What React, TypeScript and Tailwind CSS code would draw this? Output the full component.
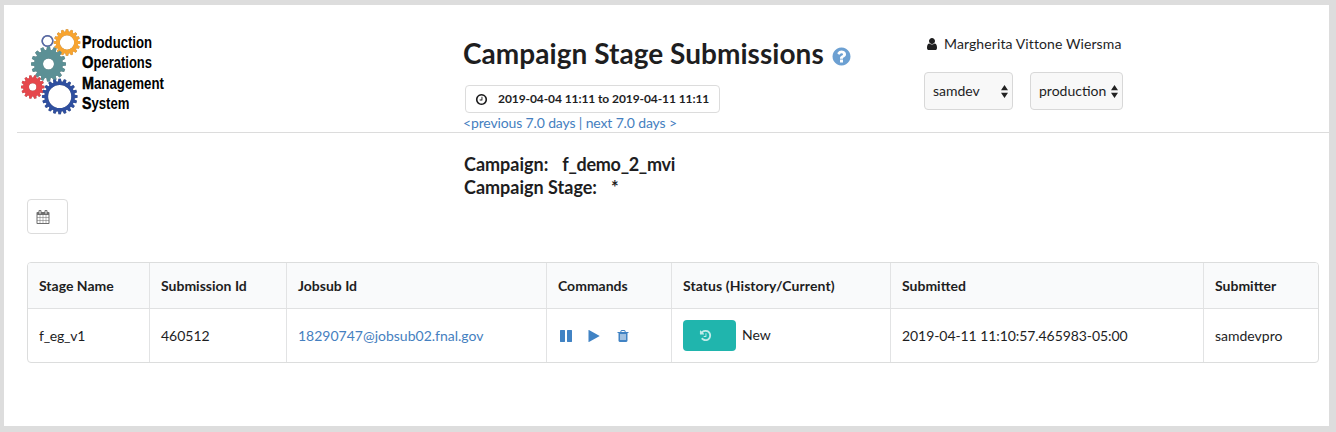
import type { ReactNode } from "react";

const icons = {
  user: "M1536 1399q0 109-62.5 187t-150.5 78h-854q-88 0-150.5-78t-62.5-187q0-85 8.500-160.500t31.500-152 58.500-131 94-89 134.500-34.500q131 128 313 128t313-128q76 0 134.500 34.500t94 89 58.500 131 31.500 152 8.500 160.500zm-256-887q0 159-112.500 271.500t-271.500 112.500-271.500-112.500-112.500-271.500 112.500-271.500 271.500-112.500 271.500 112.500 112.500 271.500z",
  help: "M1024 1376v-192q0-14-9-23t-23-9h-192q-14 0-23 9t-9 23v192q0 14 9 23t23 9h192q14 0 23-9t9-23zm256-672q0-88-55.5-163t-138.5-116-170-41q-243 0-371 213-15 24 8 42l132 100q7 6 19 6 16 0 25-12 53-68 86-92 34-24 86-24 48 0 85.5 26t37.5 59q0 38-20 61t-68 45q-63 28-115.5 86.5t-52.5 125.5v36q0 14 9 23t23 9h192q14 0 23-9t9-23q0-19 21.5-49.5t54.5-49.5q32-18 49-28.5t46-35 44.5-48 28-60.5 12.5-81zm384 192q0 209-103 385.5t-279.5 279.5-385.5 103-385.5-103-279.5-279.5-103-385.5 103-385.5 279.5-279.5 385.5-103 385.5 103 279.5 279.5 103 385.5z",
  clock: "M1024 544v448q0 14-9 23t-23 9h-320q-14 0-23-9t-9-23v-64q0-14 9-23t23-9h224v-352q0-14 9-23t23-9h64q14 0 23 9t9 23zm416 352q0-148-73-273t-198-198-273-73-273 73-198 198-73 273 73 273 198 198 273 73 273-73 198-198 73-273zm224 0q0 209-103 385.5t-279.5 279.5-385.5 103-385.5-103-279.5-279.5-103-385.5 103-385.5 279.5-279.5 385.5-103 385.5 103 279.5 279.5 103 385.5z",
  calendar: "M192 1664h288v-288h-288v288zm352 0h320v-288h-320v288zm-352-352h288v-320h-288v320zm352 0h320v-320h-320v320zm-352-384h288v-288h-288v288zm736 736h320v-288h-320v288zm-384-736h320v-288h-320v288zm768 736h288v-288h-288v288zm-384-352h320v-320h-320v320zm-352-864v-288q0-13-9.5-22.5t-22.5-9.5h-64q-13 0-22.5 9.5t-9.5 22.5v288q0 13 9.5 22.5t22.5 9.5h64q13 0 22.5-9.5t9.5-22.5zm736 864h288v-320h-288v320zm-384-384h320v-288h-320v288zm384 0h288v-288h-288v288zm32-480v-288q0-13-9.5-22.5t-22.5-9.5h-64q-13 0-22.5 9.5t-9.5 22.5v288q0 13 9.5 22.5t22.5 9.5h64q13 0 22.5-9.5t9.5-22.5zm384-64v1280q0 52-38 90t-90 38h-1408q-52 0-90-38t-38-90v-1280q0-52 38-90t90-38h128v-96q0-66 47-113t113-47h64q66 0 113 47t47 113v96h384v-96q0-66 47-113t113-47h64q66 0 113 47t47 113v96h128q52 0 90 38t38 90z",
  pause: "M1664 192v1408q0 26-19 45t-45 19h-512q-26 0-45-19t-19-45v-1408q0-26 19-45t45-19h512q26 0 45 19t19 45zm-896 0v1408q0 26-19 45t-45 19h-512q-26 0-45-19t-19-45v-1408q0-26 19-45t45-19h512q26 0 45 19t19 45z",
  play: "M1576 927l-1328 738q-23 13-39.500 3t-16.500-36v-1472q0-26 16.500-36t39.500 3l1328 738q23 13 23 31t-23 31z",
  trash: "M704 1376v-704q0-14-9-23t-23-9h-64q-14 0-23 9t-9 23v704q0 14 9 23t23 9h64q14 0 23-9t9-23zm256 0v-704q0-14-9-23t-23-9h-64q-14 0-23 9t-9 23v704q0 14 9 23t23 9h64q14 0 23-9t9-23zm256 0v-704q0-14-9-23t-23-9h-64q-14 0-23 9t-9 23v704q0 14 9 23t23 9h64q14 0 23-9t9-23zm-544-992h448l-48-117q-7-9-17-11h-317q-10 2-17 11zm928 32v64q0 14-9 23t-23 9h-96v948q0 83-47 143.5t-113 60.5h-832q-66 0-113-58.5t-47-141.5v-952h-96q-14 0-23-9t-9-23v-64q0-14 9-23t23-9h309l70-167q15-37 54-63t79-26h320q40 0 79 26t54 63l70 167h309q14 0 23 9t9 23z",
  history: "M1664 896q0 156-61 298t-164 245-245 164-298 61q-172 0-327-72.5t-264-204.5q-7-10-6.5-22.5t8.5-20.5l137-138q10-9 25-9 16 2 23 12 73 95 179 147t225 52q104 0 198.5-40.5t163.5-109.5 109.5-163.5 40.5-198.5-40.5-198.5-109.5-163.5-163.5-109.5-198.5-40.5q-98 0-188 35.5t-160 101.5l137 138q31 30 14 69-17 40-59 40h-448q-26 0-45-19t-19-45v-448q0-42 40-59 39-17 69 14l130 129q107-101 244.5-156.5t284.5-55.5q156 0 298 61t245 164 164 245 61 298zm-640-288v448q0 14-9 23t-23 9h-320q-14 0-23-9t-9-23v-64q0-14 9-23t23-9h224v-352q0-14 9-23t23-9h64q14 0 23 9t9 23z",
};

function Icon({ name, className }: { name: keyof typeof icons; className: string }) {
  return (
    <svg viewBox="0 0 1792 1792" fill="currentColor" className={className} aria-hidden="true">
      <path d={icons[name]} />
    </svg>
  );
}

type GearProps = { cx: number; cy: number; r: number; hole: number; teeth: number; depth: number; color: string };

function Gear({ cx, cy, r, hole, teeth, depth, color }: GearProps) {
  const step = (Math.PI * 2) / teeth;
  const at = (a: number, d: number) => `${(cx + Math.cos(a) * d).toFixed(2)},${(cy + Math.sin(a) * d).toFixed(2)}`;
  const points: string[] = [];
  for (let i = 0; i < teeth; i++) {
    const a = i * step;
    points.push(at(a - step * 0.36, r - depth), at(a - step * 0.22, r), at(a + step * 0.22, r), at(a + step * 0.36, r - depth));
  }
  const ring = `M${cx - hole},${cy}a${hole},${hole} 0 1 0 ${hole * 2},0a${hole},${hole} 0 1 0 ${-hole * 2},0z`;
  return <path d={`M${points.join("L")}Z${ring}`} fill={color} fillRule="evenodd" />;
}

function Logo() {
  const words = [
    { first: "P", rest: "roduction", y: 22.6, start: 9.5, width: 60.5 },
    { first: "O", rest: "perations", y: 43.2, start: 11.5, width: 58.5 },
    { first: "M", rest: "anagement", y: 63.8, start: 12, width: 70 },
    { first: "S", rest: "ystem", y: 84.4, start: 9.5, width: 38 },
  ];
  return (
    <svg width="180" height="95" viewBox="0 0 180 95" role="img" aria-label="POMS">
      <g className="drop-shadow-[0.5px_0.5px_0.6px_rgba(0,0,0,0.45)]">
        <circle cx="26.500" cy="16" r="5.300" fill="none" stroke="#5568aa" strokeWidth="1.500" />
        <Gear cx={46} cy={17.500} r={13.300} hole={7.200} teeth={16} depth={2.200} color="#f7a430" />
        <Gear cx={27.500} cy={39} r={17.500} hole={5.500} teeth={16} depth={3.200} color="#5b9095" />
        <Gear cx={11.700} cy={62} r={11.800} hole={3.700} teeth={14} depth={2.200} color="#e5474c" />
        <Gear cx={38.700} cy={71.500} r={17.800} hole={11.600} teeth={20} depth={2.700} color="#2f4f9f" />
      </g>
      <g fontFamily="Liberation Sans, Arial, sans-serif" fontWeight="700" fill="#000">
        {words.map((w) => (
          <g key={w.first}>
            <text x="61" y={w.y} fontSize="17" textLength={w.start} lengthAdjust="spacingAndGlyphs" stroke="#000" strokeWidth="0.500">{w.first}</text>
            <text x={61 + w.start} y={w.y} fontSize="16" textLength={w.width} lengthAdjust="spacingAndGlyphs">{w.rest}</text>
          </g>
        ))}
      </g>
    </svg>
  );
}

function Picker({ label, className }: { label: string; className: string }) {
  return (
    <button className={`flex h-[38px] items-center justify-between rounded border border-[#d8d8d8] bg-[#f8f8f8] pl-2 pr-1 text-[14px] ${className}`}>
      <span>{label}</span>
      <svg width="7" height="13" viewBox="0 0 7 13" fill="#222" aria-hidden="true">
        <path d="M3.500 0L7 5.300H0zM3.500 13L0 7.700h7z" />
      </svg>
    </button>
  );
}

const grid = "grid grid-cols-[122px_137px_260px_125px_219px_313px_114px]";

function Cell({ children, last }: { children: ReactNode; last?: boolean }) {
  return (
    <div className={`flex items-center whitespace-nowrap pl-[11px] ${last ? "" : "border-r border-[#e2e3e4]"}`}>{children}</div>
  );
}

export default function App() {
  const headings = ["Stage Name", "Submission Id", "Jobsub Id", "Commands", "Status (History/Current)", "Submitted", "Submitter"];
  return (
    <div className="h-[432px] w-[1336px] bg-[#dddddd] pb-[6px] pl-1 pr-[7px] pt-[5px] font-[Lato,sans-serif] text-[14px] leading-5 text-[#1e1e1f]">
      <main className="h-full bg-white">
        <header className="ml-[13px] flex h-32 border-b border-[#dcdcdc]">
          <div className="w-[447px] pl-1 pt-5">
            <Logo />
          </div>
          <div className="w-[460px] pt-[30px]">
            <div className="flex h-9 items-center">
              <h1 className="-ml-px whitespace-nowrap text-[28px] font-bold leading-9 tracking-[0.04px]">Campaign Stage Submissions</h1>
              <Icon name="help" className="ml-[7px] mt-[6px] size-[21px] text-[#6ca0d2]" />
            </div>
            <button className="ml-px mt-[14px] flex h-7 w-[255px] items-center rounded border border-[#dcdcdc] pl-[9px] text-[12px] font-bold">
              <Icon name="clock" className="mr-[10px] size-[13px]" />
              <span className="whitespace-nowrap tracking-[-0.08px]">2019-04-04 11:11 to 2019-04-11 11:11</span>
            </button>
            <div className="-ml-px text-[14px] leading-5 tracking-[-0.14px] text-[#4580c0]">
              <a>&lt;previous 7.0 days</a> | <a>next 7.0 days &gt;</a>
            </div>
          </div>
          <div className="pt-[29px]">
            <div className="flex items-center">
              <Icon name="user" className="ml-[1px] mr-[5px] size-[14px]" />
              <span className="tracking-[0.1px]">Margherita Vittone Wiersma</span>
            </div>
            <div className="mt-[18px] flex gap-[17px]">
              <Picker label="samdev" className="w-[89px]" />
              <Picker label="production" className="w-[93px]" />
            </div>
          </div>
        </header>

        <section className="ml-[460px] mt-5 h-[46px] text-[18px] font-bold leading-[23px]">
          <div className="flex gap-[14px]"><span>Campaign:</span><span className="tracking-[-0.3px]">f_demo_2_mvi</span></div>
          <div className="flex gap-[14px]"><span>Campaign Stage:</span><span>*</span></div>
        </section>

        <button className="ml-[23px] flex h-[35px] w-[41px] items-center rounded border border-[#dcdcdc] pl-2 text-[#6e6e6e]">
          <Icon name="calendar" className="size-[14px]" />
        </button>

        <div className="ml-[23px] mt-7 h-[101px] w-[1292px] overflow-hidden rounded border border-[#dcdddd]">
          <div className={`${grid} h-[46px] border-b border-[#e0e1e2] bg-[#f9fafb] font-bold`}>
            {headings.map((h, i) => (
              <Cell key={h} last={i === headings.length - 1}>
                <span className={h.startsWith("Status") ? "tracking-[0.08px]" : ""}>{h}</span>
              </Cell>
            ))}
          </div>
          <div className={`${grid} h-[53px]`}>
            <Cell><span className="tracking-[-0.25px]">f_eg_v1</span></Cell>
            <Cell>460512</Cell>
            <Cell><a className="text-[#4580c0]">18290747@jobsub02.fnal.gov</a></Cell>
            <Cell>
              <div className="flex gap-[14px] pl-px text-[#4183c4]">
                <Icon name="pause" className="size-[14px]" />
                <Icon name="play" className="size-[14px]" />
                <Icon name="trash" className="ml-px size-[14px]" />
              </div>
            </Cell>
            <Cell>
              <button className="flex h-[31px] w-[53px] items-center rounded bg-[#20b5ad] pl-4 text-[#c3ebe9]">
                <Icon name="history" className="size-[13px]" />
              </button>
              <span className="-mt-px ml-[6px]">New</span>
            </Cell>
            <Cell><span className="tracking-[-0.07px]">2019-04-11 11:10:57.465983-05:00</span></Cell>
            <Cell last>samdevpro</Cell>
          </div>
        </div>
      </main>
    </div>
  );
}
